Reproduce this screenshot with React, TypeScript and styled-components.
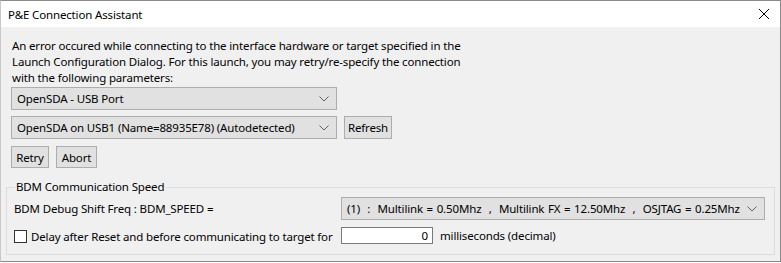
import { createGlobalStyle } from 'styled-components'
import styled from 'styled-components'

const GlobalStyle = createGlobalStyle`
  html, body {
    margin: 0;
    padding: 0;
    background: #ffffff;
  }
  body {
    font-family: 'Noto Sans', 'Open Sans', sans-serif;
    font-size: 11.5px;
    letter-spacing: -0.15px;
    color: #000;
  }
`

const Window = styled.div`
  width: 779px;
  height: 260px;
  border: 1px solid #8a8a8a;
  border-left-color: #c8c8c8;
  display: flex;
  flex-direction: column;
  background: #f0f0f0;
`

const TitleBar = styled.div`
  height: 26px;
  background: #ffffff;
  display: flex;
  align-items: center;
  justify-content: space-between;
  padding: 0 10px 0 7px;
`

const CloseIcon = styled.svg`
  width: 12px;
  height: 12px;
`

const Body = styled.div`
  flex: 1;
  padding: 11px 5px 0 5px;
  display: flex;
  flex-direction: column;
`

const Message = styled.p`
  margin: 0 0 0 6px;
  line-height: 16px;
  white-space: pre-line;
`

const Row = styled.div<{ $gap: number }>`
  display: flex;
  align-items: center;
  gap: 7px;
  margin: ${({ $gap }) => $gap}px 0 0 5px;
`

const Combo = styled.div<{ $width: number; $spread?: boolean }>`
  box-sizing: border-box;
  width: ${({ $width }) => $width}px;
  height: 23px;
  flex-shrink: 0;
  background: #e1e1e1;
  border: 1px solid #adadad;
  display: flex;
  align-items: center;
  justify-content: space-between;
  padding: 0 7px 0 5px;
  white-space: pre;
  word-spacing: ${({ $spread }) => ($spread ? '0.8px' : 'normal')};
`

const Chevron = () => (
  <svg width="10" height="6" viewBox="0 0 10 6">
    <polyline points="0.5,0.5 5,5 9.5,0.5" fill="none" stroke="#606060" strokeWidth="1" />
  </svg>
)

const Button = styled.button<{ $width: number; $height?: number }>`
  box-sizing: border-box;
  width: ${({ $width }) => $width}px;
  height: ${({ $height }) => $height ?? 23}px;
  background: #e1e1e1;
  border: 1px solid #adadad;
  font: inherit;
  letter-spacing: inherit;
  color: #000;
  padding: 0;
`

const Group = styled.fieldset`
  margin: 12px 0 0 0;
  padding: 3px 7px 0 7px;
  height: 75px;
  box-sizing: border-box;
  border: 1px solid #dcdcdc;
`

const Legend = styled.legend`
  padding: 0 2px 0 1px;
  margin-left: 1px;
  line-height: 14px;
`

const FieldGrid = styled.div`
  display: grid;
  grid-template-columns: 327px 1fr;
  row-gap: 7px;
  align-items: center;
`

const CheckLabel = styled.label`
  display: flex;
  align-items: center;
  gap: 4px;
  white-space: nowrap;
  margin-top: 2px;
`

const Box = styled.span`
  box-sizing: border-box;
  flex-shrink: 0;
  width: 13px;
  height: 13px;
  border: 1px solid #333333;
  background: #ffffff;
`

const Inline = styled.div`
  display: flex;
  align-items: center;
  gap: 7px;
`

const NumberInput = styled.div`
  box-sizing: border-box;
  width: 92px;
  height: 17px;
  border: 1px solid #7a7a7a;
  background: #ffffff;
  text-align: right;
  padding-right: 4px;
  line-height: 15px;
`

const message = `An error occured while connecting to the interface hardware or target specified in the
Launch Configuration Dialog. For this launch, you may retry/re-specify the connection
with the following parameters:`

export default function App() {
  return (
    <>
      <GlobalStyle />
      <Window>
        <TitleBar>
          <span>P&amp;E Connection Assistant</span>
          <CloseIcon viewBox="0 0 12 12">
            <path d="M1 1 L11 11 M11 1 L1 11" stroke="#000" strokeWidth="1" />
          </CloseIcon>
        </TitleBar>
        <Body>
          <Message>{message}</Message>
          <Row $gap={1}>
            <Combo $width={326}>
              <span>OpenSDA - USB Port</span>
              <Chevron />
            </Combo>
          </Row>
          <Row $gap={6}>
            <Combo $width={326}>
              <span>OpenSDA on USB1 (Name=88935E78) (Autodetected)</span>
              <Chevron />
            </Combo>
            <Button $width={48}>Refresh</Button>
          </Row>
          <Row $gap={7}>
            <Button $width={38} $height={22}>Retry</Button>
            <Button $width={41} $height={22}>Abort</Button>
          </Row>
          <Group>
            <Legend>BDM Communication Speed</Legend>
            <FieldGrid>
              <span>BDM Debug Shift Freq : BDM_SPEED =</span>
              <Combo $width={424} $spread>
                <span>(1)  :  Multilink = 0.50Mhz  ,  Multilink FX = 12.50Mhz  ,  OSJTAG = 0.25Mhz</span>
                <Chevron />
              </Combo>
              <CheckLabel>
                <Box />
                Delay after Reset and before communicating to target for
              </CheckLabel>
              <Inline>
                <NumberInput>0</NumberInput>
                <span>milliseconds (decimal)</span>
              </Inline>
            </FieldGrid>
          </Group>
        </Body>
      </Window>
    </>
  )
}
